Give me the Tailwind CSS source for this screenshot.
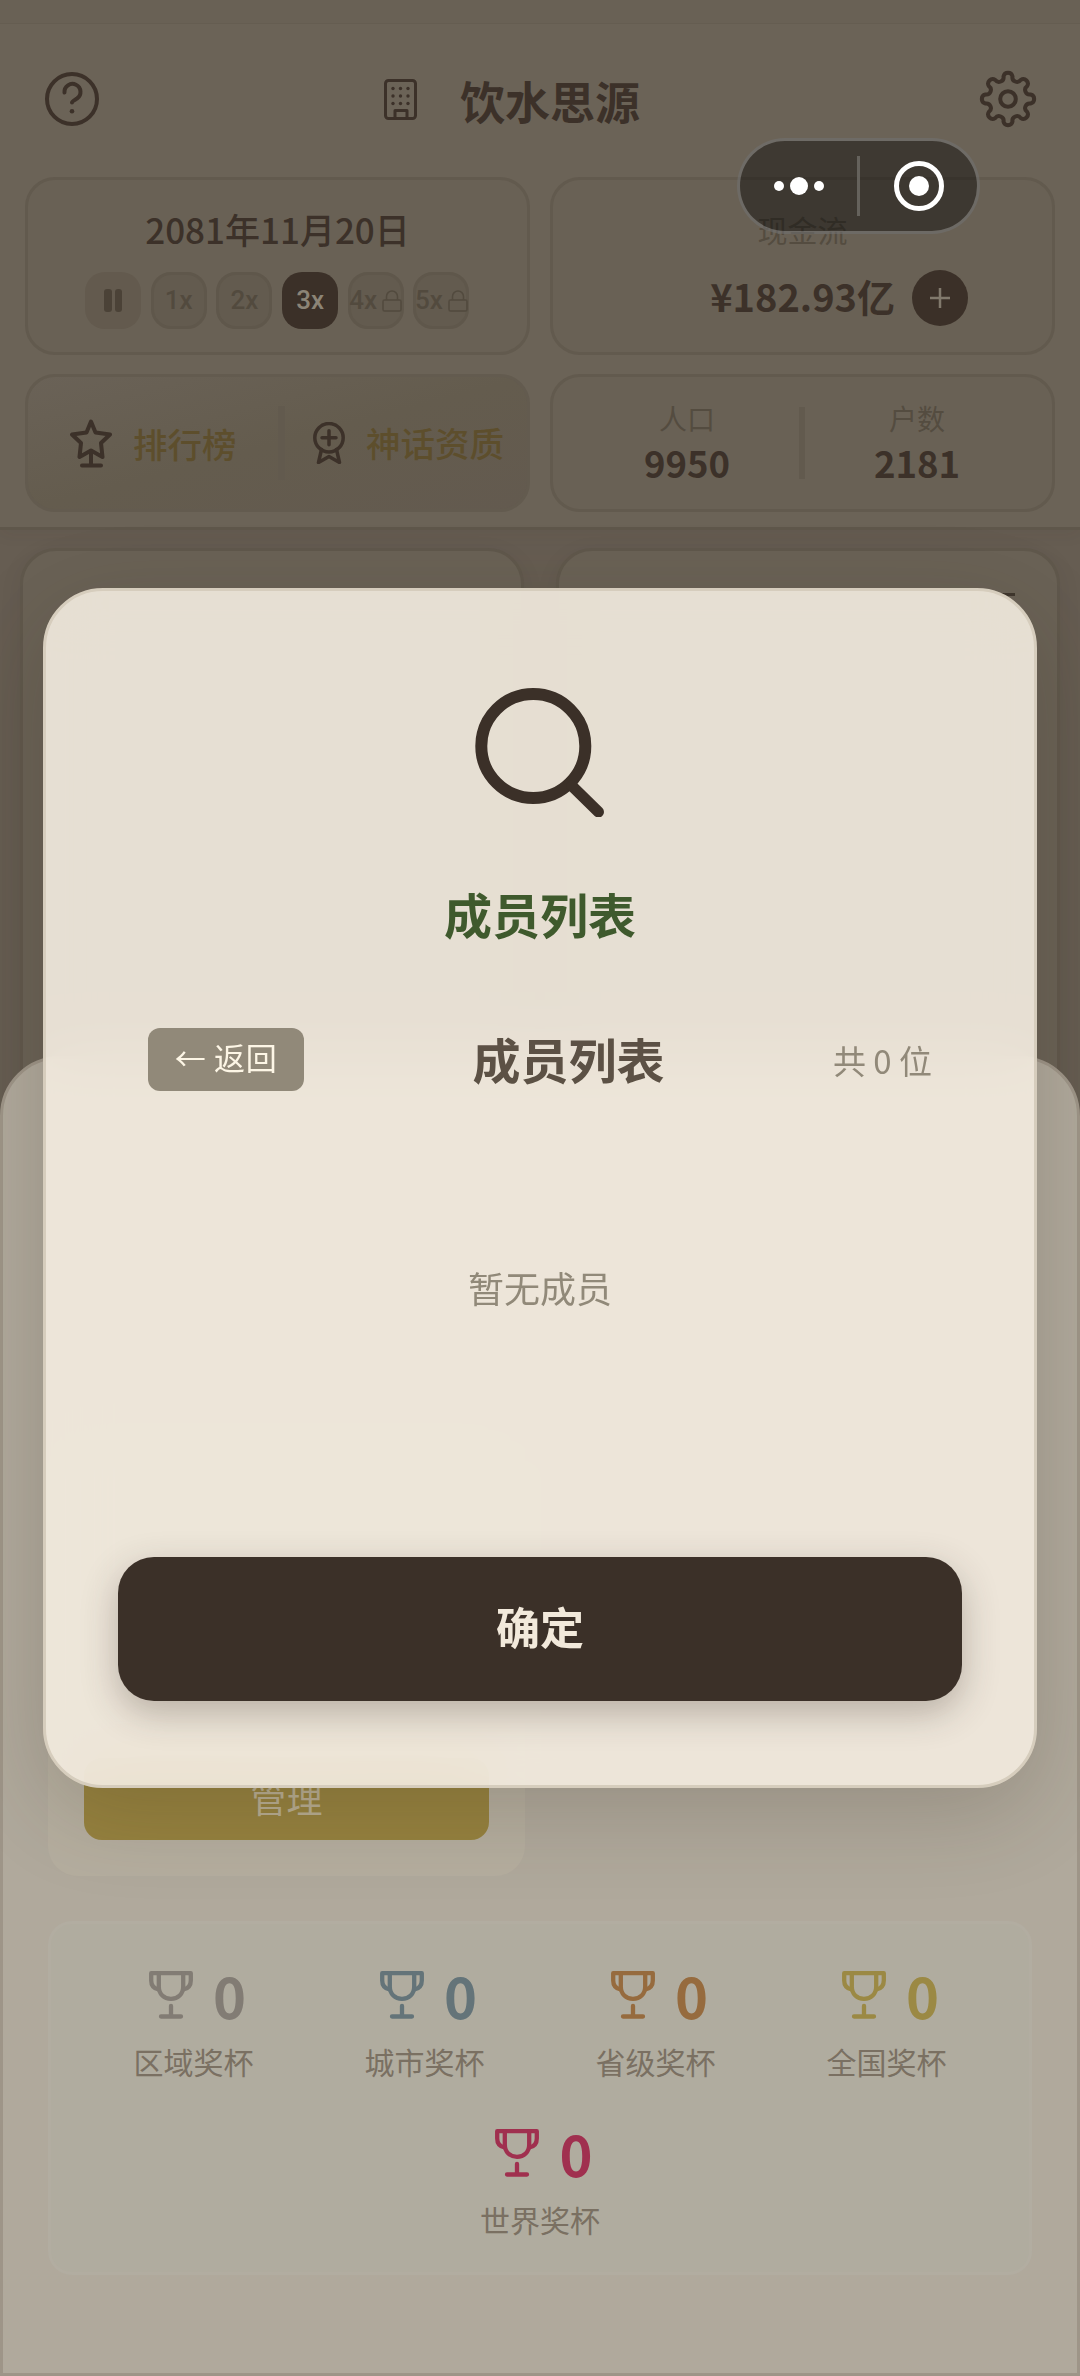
<!DOCTYPE html>
<html lang="zh-CN">
<head>
<meta charset="utf-8">
<title>饮水思源</title>
<script src="https://cdn.jsdelivr.net/npm/@tailwindcss/browser@4"></script>
</head>
<body class="bg-[#665d52]">
<svg class="hidden">
  <symbol id="cup" viewBox="0 0 44 48">
    <g fill="none" stroke="currentColor" stroke-width="4.300" stroke-linecap="round" stroke-linejoin="round">
      <path d="M2.200 2.200H41.800V9.500C41.800 14.500 39 17.500 34.500 18.500M2.200 2.200V9.500C2.200 14.500 5 17.500 9.500 18.500"/>
      <path d="M9.800 2V15.500C9.800 23 15 27.800 22 27.800S34.200 23 34.200 15.500V2"/>
      <path d="M22 35V45.500M12 45.500H32"/>
    </g>
  </symbol>
  <symbol id="lock" viewBox="0 0 20 22">
    <g fill="none" stroke="currentColor" stroke-width="1.500" stroke-linejoin="round">
      <rect x="1" y="10" width="18" height="11" rx="1.500"/>
      <path d="M4.500 10V6.500a5.500 5.500 0 0 1 11 0V10"/>
    </g>
  </symbol>
</svg>
<div class="relative h-[2376px] w-[1080px] overflow-hidden bg-[#665d52] font-['Noto_Sans_CJK_SC',sans-serif] text-[#3c3129]">

  <!-- header -->
  <header class="h-[530px] border-b-3 border-[#5f574b] bg-[#6b6357] shadow-[0_4px_16px_rgba(50,40,30,0.06)]">
    <div class="h-6 border-b border-[#655d51] bg-[#696155]"></div>
    <div class="flex h-[153px] items-start justify-between pt-[45px] pr-[42px] pl-[42px]">
      <svg class="size-[60px]" viewBox="0 0 60 60" fill="none" stroke="currentColor" stroke-width="4" stroke-linecap="round">
        <circle cx="30" cy="30" r="25"/>
        <path d="M22.500 23.500A8 8 0 1 1 35 29.500C32 31.300 30 32.300 30 33.500"/>
        <circle cx="30" cy="42.300" r="2.300" fill="currentColor" stroke="none"/>
      </svg>
      <div class="flex items-center gap-[43px] pt-0.5 pr-[56px]">
        <svg class="-mt-1 h-[41px] w-[33px]" viewBox="0 0 33 41" fill="none" stroke="currentColor" stroke-width="3">
          <rect x="1.500" y="1.500" width="30" height="38" rx="3"/>
          <path d="M11 39.500V31.500H23V39.500" stroke-linejoin="round"/>
          <g fill="currentColor" stroke="none">
            <circle cx="9" cy="9.500" r="1.700"/><circle cx="16.500" cy="9.500" r="1.700"/><circle cx="24" cy="9.500" r="1.700"/>
            <circle cx="9" cy="17" r="1.700"/><circle cx="16.500" cy="17" r="1.700"/><circle cx="24" cy="17" r="1.700"/>
            <circle cx="9" cy="24.500" r="1.700"/><circle cx="16.500" cy="24.500" r="1.700"/><circle cx="24" cy="24.500" r="1.700"/>
          </g>
        </svg>
        <h1 class="text-[45px] leading-[60px] font-bold">饮水思源</h1>
      </div>
      <svg class="size-[60px]" viewBox="-30 -30 60 60" fill="none" stroke="currentColor" stroke-width="4">
        <path d="M-4.490-22.560A4.600 4.600 0 0 1 4.490-22.560A4.600 4.600 0 0 0 12.780-19.120A4.600 4.600 0 0 1 19.120-12.780A4.600 4.600 0 0 0 22.560-4.490A4.600 4.600 0 0 1 22.560 4.490A4.600 4.600 0 0 0 19.120 12.780A4.600 4.600 0 0 1 12.780 19.120A4.600 4.600 0 0 0 4.490 22.560A4.600 4.600 0 0 1-4.490 22.560A4.600 4.600 0 0 0-12.780 19.120A4.600 4.600 0 0 1-19.120 12.780A4.600 4.600 0 0 0-22.560 4.490A4.600 4.600 0 0 1-22.560-4.490A4.600 4.600 0 0 0-19.120-12.780A4.600 4.600 0 0 1-12.780-19.120A4.600 4.600 0 0 0-4.490-22.560Z"/>
        <circle r="7.800"/>
      </svg>
    </div>

    <div class="grid grid-cols-[505px_505px] grid-rows-[178px_138px] justify-center gap-x-5 gap-y-[19px]">
      <section class="rounded-[30px] border-3 border-[#625a4e] bg-[#696155] pt-[26px]">
        <div class="text-center text-[35px] leading-[46px] font-medium">2081年11月20日</div>
        <div class="mt-5 ml-[57px] flex gap-[9.700px] font-[Roboto] text-[26px] font-medium text-[#524a3e]">
          <div class="flex h-[57px] w-14 items-center justify-center gap-[3px] rounded-[20px] bg-[#635a4e]">
            <span class="h-[23px] w-[7.500px] rounded-[3px] bg-[#4b4237]"></span><span class="h-[23px] w-[7.500px] rounded-[3px] bg-[#4b4237]"></span>
          </div>
          <div class="flex h-[57px] w-14 items-center justify-center rounded-[20px] border-3 border-[#5f574b] bg-[#635b4f]">1x</div>
          <div class="flex h-[57px] w-14 items-center justify-center rounded-[20px] border-3 border-[#5f574b] bg-[#635b4f]">2x</div>
          <div class="flex h-[57px] w-14 items-center justify-center rounded-[20px] bg-[#3b3028] text-[#8c8476]">3x</div>
          <div class="flex h-[57px] w-14 items-center justify-center gap-[5px] rounded-[20px] border-3 border-[#5f574b] bg-[#635b4f]">4x<svg class="h-[22px] w-5 shrink-0"><use href="#lock"/></svg></div>
          <div class="flex h-[57px] w-14 items-center justify-center gap-[5px] rounded-[20px] border-3 border-[#5f574b] bg-[#635b4f]">5x<svg class="h-[22px] w-5 shrink-0"><use href="#lock"/></svg></div>
        </div>
      </section>

      <section class="rounded-[30px] border-3 border-[#625a4e] bg-[#696155] pt-[26px]">
        <div class="text-center text-[30px] leading-[46px] text-[#544c40]">现金流</div>
        <div class="mt-[18px] flex items-center justify-end gap-[17px] pr-[84px]">
          <span class="-mt-1 text-[38px] leading-[56px] font-bold">¥182.93亿</span>
          <span class="flex size-14 items-center justify-center rounded-full bg-[#3b3028]">
            <svg class="size-5" viewBox="0 0 20 20" stroke="#81796c" stroke-width="2.500"><path d="M10 0V20M0 10H20"/></svg>
          </span>
        </div>
      </section>

      <section class="flex items-center rounded-[30px] border-3 border-[#635b4f] bg-linear-to-br from-[#6a6257] via-[#645c4e] to-[#635a4f]">
        <div class="flex w-[250px] items-center gap-[21px] pl-[42px]">
          <svg class="h-[49px] w-[42px]" viewBox="0 0 42 49" fill="none" stroke="currentColor" stroke-width="4" stroke-linecap="round" stroke-linejoin="round">
            <path d="M21 2.500L25.500 13.500L40 15.500L31 24L32.500 38L21 31.500L9.500 38L11 24L2 15.500L16.500 13.500ZM21 32V46M12 46.500H31"/>
          </svg>
          <span class="text-[34.500px] leading-[44px] font-medium text-[#5d4e2c]">排行榜</span>
        </div>
        <div class="h-[74px] w-[7px] bg-[#625a4e]"></div>
        <div class="flex items-center gap-[21px] pl-[28px]">
          <svg class="h-[42px] w-8" viewBox="0 0 32 42" fill="none" stroke="currentColor" stroke-width="3.500" stroke-linecap="round" stroke-linejoin="round">
            <circle cx="16" cy="15.700" r="14.200"/><path d="M9 15.700H23M16 8.700V22.700M8.500 27.500L5.500 40.500L16 34.500L26.500 40.500L23.500 27.500"/>
          </svg>
          <span class="-mt-0.5 text-[34.500px] leading-[44px] font-medium text-[#5d4e2c]">神话资质</span>
        </div>
      </section>

      <section class="grid grid-cols-[1fr_6px_1fr] items-center rounded-[30px] border-3 border-[#625a4e] bg-[#696155] pr-[23px] pl-[22px] text-center">
        <div>
          <div class="text-[28px] leading-[40px] text-[#544c40]">人口</div>
          <div class="text-[36.500px] leading-[50px] font-bold">9950</div>
        </div>
        <div class="h-[72px] bg-[#625a4e]"></div>
        <div>
          <div class="text-[28px] leading-[40px] text-[#544c40]">户数</div>
          <div class="text-[36.500px] leading-[50px] font-bold">2181</div>
        </div>
      </section>
    </div>
  </header>

  <!-- building cards -->
  <main class="grid grid-cols-[504px_504px] justify-center gap-8 pt-[18px]">
    <section class="h-[640px] rounded-[36px] border-3 border-[#60584c] bg-[#6a6256] shadow-[0_6px_24px_rgba(40,30,20,0.06)]"></section>
    <section class="flex h-[640px] justify-end rounded-[36px] border-3 border-[#60584c] bg-[#6a6256] pt-[42px] pr-[42px] shadow-[0_6px_24px_rgba(40,30,20,0.06)]">
      <span class="h-[3px] w-5 bg-[#3f372d]"></span>
    </section>
  </main>

  <!-- bottom sheet -->
  <div class="absolute inset-x-0 top-[1056px] bottom-0 flex flex-col rounded-t-[60px] border-3 border-[#9e9588] bg-[#b0a99c] px-[45px] pt-[380px]">
    <div class="flex h-[437px] w-[477px] flex-col justify-end rounded-[30px] bg-[#b5ae9f] px-9 pb-9">
      <div class="flex h-[82px] items-center justify-center rounded-[18px] bg-[#96823f] pb-1 text-[36px] text-[#b9ae92]">管理</div>
    </div>
    <div class="mt-[45px] flex h-[354px] w-[984px] flex-wrap content-start justify-center gap-y-[22px] rounded-3xl border-3 border-[#b2ada1] bg-[#b0ac9f] px-[26px] pt-[35px] text-[30px] text-[#7a7062]">
      <div class="flex h-[136px] w-[231px] flex-col items-center">
        <div class="flex items-center gap-[20px] pl-2 text-[56px] leading-[72px] font-bold text-[#827c74]"><svg class="h-12 w-11"><use href="#cup"/></svg>0</div>
        <div class="mt-[10px] leading-[40px]">区域奖杯</div>
      </div>
      <div class="flex h-[136px] w-[231px] flex-col items-center">
        <div class="flex items-center gap-[20px] pl-2 text-[56px] leading-[72px] font-bold text-[#647479]"><svg class="h-12 w-11"><use href="#cup"/></svg>0</div>
        <div class="mt-[10px] leading-[40px]">城市奖杯</div>
      </div>
      <div class="flex h-[136px] w-[231px] flex-col items-center">
        <div class="flex items-center gap-[20px] pl-2 text-[56px] leading-[72px] font-bold text-[#966b3e]"><svg class="h-12 w-11"><use href="#cup"/></svg>0</div>
        <div class="mt-[10px] leading-[40px]">省级奖杯</div>
      </div>
      <div class="flex h-[136px] w-[231px] flex-col items-center">
        <div class="flex items-center gap-[20px] pl-2 text-[56px] leading-[72px] font-bold text-[#9b8944]"><svg class="h-12 w-11"><use href="#cup"/></svg>0</div>
        <div class="mt-[10px] leading-[40px]">全国奖杯</div>
      </div>
      <div class="flex h-[136px] w-[231px] flex-col items-center">
        <div class="flex items-center gap-[20px] pl-2 text-[56px] leading-[72px] font-bold text-[#a0304f]"><svg class="h-12 w-11"><use href="#cup"/></svg>0</div>
        <div class="mt-[10px] leading-[40px]">世界奖杯</div>
      </div>
    </div>
  </div>

  <!-- member list dialog -->
  <div class="absolute top-[588px] left-[43px] flex h-[1200px] w-[994px] flex-col items-center rounded-[60px] border-3 border-[#d6cdbd] bg-[#f3ebdf]/91 px-[72px] pt-[94px] shadow-[0_24px_90px_rgba(50,40,25,0.2)] backdrop-blur-[30px]">
    <svg class="h-[132px] w-[130px] shrink-0" viewBox="0 0 130 132" fill="none" stroke="#3b3028" stroke-width="12" stroke-linecap="round">
      <circle cx="58.300" cy="61" r="52"/><path d="M97 101L123.500 127" stroke-width="11"/>
    </svg>
    <h2 class="mt-[60px] text-[48px] leading-[72px] font-bold text-[#3f5a2d]">成员列表</h2>
    <div class="mt-[79px] flex w-[784px] items-center justify-between">
      <button class="h-[63px] w-[156px] rounded-xl bg-[#918979] pb-1.5 text-[31px] leading-[56px] tracking-[0.700px] text-[#fdf6e6]">← 返回</button>
      <h3 class="-mt-1 text-[48px] leading-[64px] font-bold text-[#5c5145]">成员列表</h3>
      <span class="text-[33px] leading-[60px] text-[#918979]">共 0 位</span>
    </div>
    <p class="mt-[170px] text-[36px] leading-[52px] text-[#918979]">暂无成员</p>
    <button class="mt-[244px] h-36 w-[844px] shrink-0 rounded-[36px] bg-[#3b3028] pb-1.5 text-[44px] leading-none font-bold text-[#f2e9db] shadow-[0_12px_36px_rgba(59,48,40,0.3)]">确定</button>
  </div>

  <!-- mini-program capsule -->
  <div class="absolute top-[138px] left-[737px] flex h-24 w-[243px] items-center rounded-full border-3 border-white/25 bg-black/42 bg-clip-border">
    <div class="flex w-[117px] items-center justify-center gap-[6px]">
      <span class="size-[10px] rounded-full bg-white"></span><span class="size-[18px] rounded-full bg-white"></span><span class="size-[10px] rounded-full bg-white"></span>
    </div>
    <div class="h-[60px] w-[3px] bg-[#65625c]"></div>
    <div class="flex flex-1 items-center justify-center">
      <span class="flex size-[50px] items-center justify-center rounded-full border-5 border-white"><span class="size-5 rounded-full bg-white"></span></span>
    </div>
  </div>
</div>
</body>
</html>
